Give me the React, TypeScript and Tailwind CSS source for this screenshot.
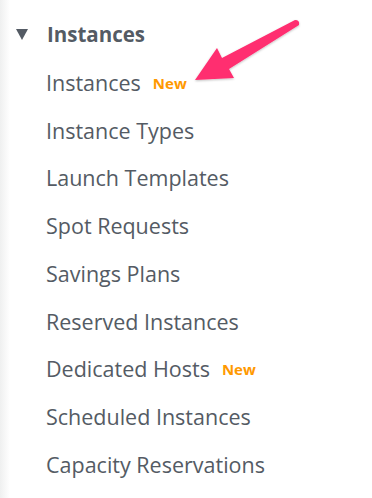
import React from "react";

const items = [
  { label: "Instances", isNew: true },
  { label: "Instance Types" },
  { label: "Launch Templates" },
  { label: "Spot Requests" },
  { label: "Savings Plans" },
  { label: "Reserved Instances" },
  { label: "Dedicated Hosts", isNew: true },
  { label: "Scheduled Instances" },
  { label: "Capacity Reservations" },
];

const font = { fontFamily: "'Open Sans', 'Noto Sans', sans-serif" };

export default function App() {
  return (
    <div className="relative w-[372px] h-[498px] overflow-hidden bg-white" style={font}>
      <div className="absolute left-0 top-0 h-full w-[10px] bg-gradient-to-r from-[#eff0f0] to-white" />

      <div className="relative pt-[10px]">
        <div className="flex items-center h-[48px] pl-[16px]">
          <svg width="12" height="12" viewBox="0 0 12 12" className="mr-[19px]">
            <path d="M0 1 L12 1 L6 12 Z" fill="#545b64" />
          </svg>
          <span className="text-[20.5px] font-bold text-[#545b64]">Instances</span>
        </div>

        <ul className="pl-[46px] pt-[1px]">
          {items.map((item) => (
            <li key={item.label} className="flex items-center h-[47.75px]">
              <span className="text-[21.5px] text-[#545b64]">{item.label}</span>
              {item.isNew && (
                <span className="ml-[12px] text-[15px] font-bold text-[#ff9900]">New</span>
              )}
            </li>
          ))}
        </ul>
      </div>

      {/* annotation arrow */}
      <svg className="absolute left-0 top-0" width="372" height="498" viewBox="0 0 372 498">
        <defs>
          <filter id="sh" x="-20%" y="-20%" width="140%" height="140%">
            <feDropShadow dx="0" dy="1" stdDeviation="1" floodColor="#000" floodOpacity="0.25" />
          </filter>
        </defs>
        <path
          d="M195 80 L217 48 L222 58 L295 20 Q300 20 299 25 L229 69 L234 78 Z"
          fill="#ff2d6f"
          filter="url(#sh)"
        />
      </svg>
    </div>
  );
}
